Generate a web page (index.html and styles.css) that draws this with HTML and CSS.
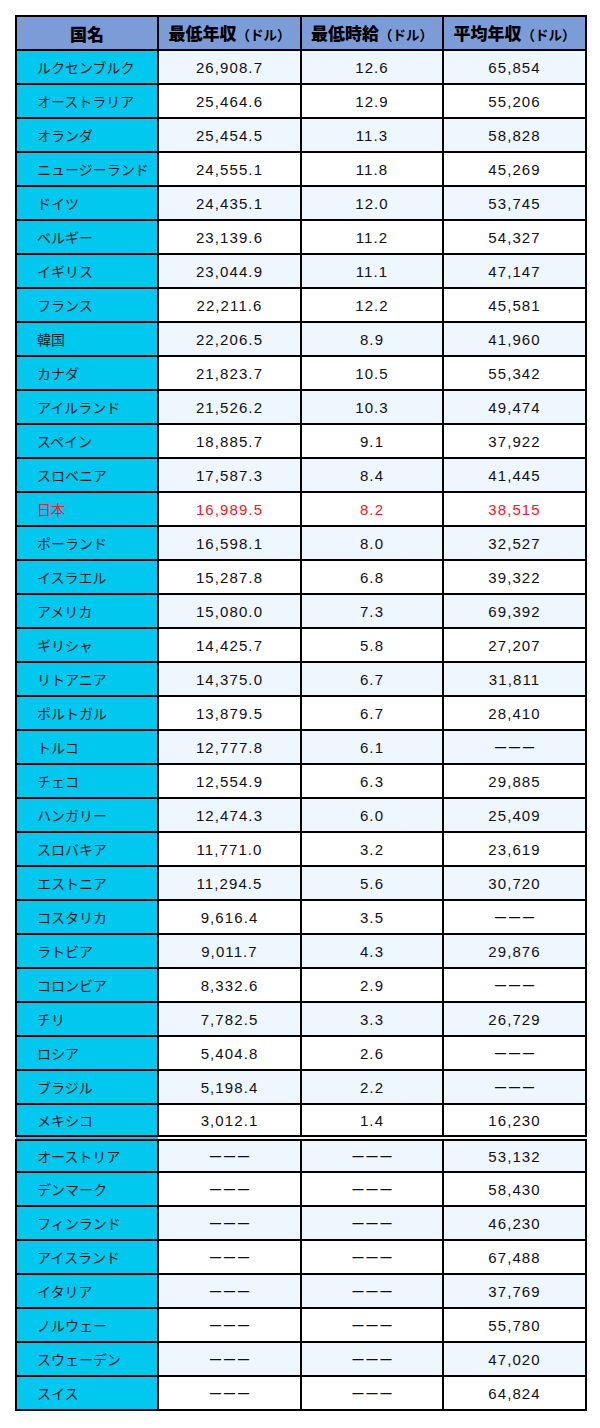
FILE: index.html
```html
<!DOCTYPE html>
<html lang="ja">
<head>
<meta charset="utf-8">
<title>最低賃金</title>
<link rel="stylesheet" href="styles.css">
</head>
<body>
<table class="wage">
<colgroup><col class="c1"><col class="c2"><col class="c3"><col class="c4"></colgroup>
<thead>
<tr><th>国名</th><th>最低年収<span class="unit">（ドル）</span></th><th>最低時給<span class="unit">（ドル）</span></th><th>平均年収<span class="unit">（ドル）</span></th></tr>
</thead>
<tbody>
<tr><td class="name">ルクセンブルク</td><td>26,908.7</td><td>12.6</td><td>65,854</td></tr>
<tr><td class="name">オーストラリア</td><td>25,464.6</td><td>12.9</td><td>55,206</td></tr>
<tr><td class="name">オランダ</td><td>25,454.5</td><td>11.3</td><td>58,828</td></tr>
<tr><td class="name">ニュージーランド</td><td>24,555.1</td><td>11.8</td><td>45,269</td></tr>
<tr><td class="name">ドイツ</td><td>24,435.1</td><td>12.0</td><td>53,745</td></tr>
<tr><td class="name">ベルギー</td><td>23,139.6</td><td>11.2</td><td>54,327</td></tr>
<tr><td class="name">イギリス</td><td>23,044.9</td><td>11.1</td><td>47,147</td></tr>
<tr><td class="name">フランス</td><td>22,211.6</td><td>12.2</td><td>45,581</td></tr>
<tr><td class="name">韓国</td><td>22,206.5</td><td>8.9</td><td>41,960</td></tr>
<tr><td class="name">カナダ</td><td>21,823.7</td><td>10.5</td><td>55,342</td></tr>
<tr><td class="name">アイルランド</td><td>21,526.2</td><td>10.3</td><td>49,474</td></tr>
<tr><td class="name">スペイン</td><td>18,885.7</td><td>9.1</td><td>37,922</td></tr>
<tr><td class="name">スロベニア</td><td>17,587.3</td><td>8.4</td><td>41,445</td></tr>
<tr class="jp"><td class="name">日本</td><td>16,989.5</td><td>8.2</td><td>38,515</td></tr>
<tr><td class="name">ポーランド</td><td>16,598.1</td><td>8.0</td><td>32,527</td></tr>
<tr><td class="name">イスラエル</td><td>15,287.8</td><td>6.8</td><td>39,322</td></tr>
<tr><td class="name">アメリカ</td><td>15,080.0</td><td>7.3</td><td>69,392</td></tr>
<tr><td class="name">ギリシャ</td><td>14,425.7</td><td>5.8</td><td>27,207</td></tr>
<tr><td class="name">リトアニア</td><td>14,375.0</td><td>6.7</td><td>31,811</td></tr>
<tr><td class="name">ポルトガル</td><td>13,879.5</td><td>6.7</td><td>28,410</td></tr>
<tr><td class="name">トルコ</td><td>12,777.8</td><td>6.1</td><td class="na">ーーー</td></tr>
<tr><td class="name">チェコ</td><td>12,554.9</td><td>6.3</td><td>29,885</td></tr>
<tr><td class="name">ハンガリー</td><td>12,474.3</td><td>6.0</td><td>25,409</td></tr>
<tr><td class="name">スロバキア</td><td>11,771.0</td><td>3.2</td><td>23,619</td></tr>
<tr><td class="name">エストニア</td><td>11,294.5</td><td>5.6</td><td>30,720</td></tr>
<tr><td class="name">コスタリカ</td><td>9,616.4</td><td>3.5</td><td class="na">ーーー</td></tr>
<tr><td class="name">ラトビア</td><td>9,011.7</td><td>4.3</td><td>29,876</td></tr>
<tr><td class="name">コロンビア</td><td>8,332.6</td><td>2.9</td><td class="na">ーーー</td></tr>
<tr><td class="name">チリ</td><td>7,782.5</td><td>3.3</td><td>26,729</td></tr>
<tr><td class="name">ロシア</td><td>5,404.8</td><td>2.6</td><td class="na">ーーー</td></tr>
<tr><td class="name">ブラジル</td><td>5,198.4</td><td>2.2</td><td class="na">ーーー</td></tr>
<tr class="sep"><td class="name">メキシコ</td><td>3,012.1</td><td>1.4</td><td>16,230</td></tr>
<tr><td class="name">オーストリア</td><td class="na">ーーー</td><td class="na">ーーー</td><td>53,132</td></tr>
<tr><td class="name">デンマーク</td><td class="na">ーーー</td><td class="na">ーーー</td><td>58,430</td></tr>
<tr><td class="name">フィンランド</td><td class="na">ーーー</td><td class="na">ーーー</td><td>46,230</td></tr>
<tr><td class="name">アイスランド</td><td class="na">ーーー</td><td class="na">ーーー</td><td>67,488</td></tr>
<tr><td class="name">イタリア</td><td class="na">ーーー</td><td class="na">ーーー</td><td>37,769</td></tr>
<tr><td class="name">ノルウェー</td><td class="na">ーーー</td><td class="na">ーーー</td><td>55,780</td></tr>
<tr><td class="name">スウェーデン</td><td class="na">ーーー</td><td class="na">ーーー</td><td>47,020</td></tr>
<tr><td class="name">スイス</td><td class="na">ーーー</td><td class="na">ーーー</td><td>64,824</td></tr>
</tbody>
</table>
</body>
</html>
```
FILE: styles.css
```css
html, body {
  margin: 0;
  padding: 0;
  background: #ffffff;
}
body {
  padding: 15px;
  font-family: "Liberation Sans", "Noto Sans CJK JP", sans-serif;
  color: #111111;
}
.wage {
  width: 570px;
  border-collapse: collapse;
  border: 2px solid #000000;
  table-layout: fixed;
}
.c1 { width: 142px; }
.c2 { width: 143px; }
.c3 { width: 142px; }
.c4 { width: 143px; }
.wage th,
.wage td {
  border: 2px solid #000000;
  padding: 0;
  height: 34px;
  text-align: center;
  vertical-align: middle;
  box-sizing: border-box;
}
.wage th {
  background: #7c9cd8;
  font-family: "Noto Sans CJK JP", sans-serif;
  font-weight: 900;
  font-size: 17px;
  color: #000000;
  line-height: 1;
  white-space: nowrap;
}
.unit {
  font-size: 13.5px;
  font-weight: 700;
}
.wage td {
  font-size: 15px;
  letter-spacing: 1.1px;
  line-height: 1;
}
.wage tbody tr:nth-child(odd) td {
  background: #eef6fe;
}
.wage tbody tr:nth-child(even) td {
  background: #ffffff;
}
.wage tbody tr td.name {
  background: #00c8ee;
  text-align: left;
  padding-left: 20px;
  font-family: "Noto Sans CJK JP", sans-serif;
  font-size: 14px;
  letter-spacing: 0;
  color: #1a1a1a;
}
.wage td.na {
  font-family: "Noto Sans CJK JP", sans-serif;
  font-size: 14px;
  letter-spacing: 0;
}
.wage tr.jp td,
.wage tbody tr.jp td.name {
  color: #e8202a;
}
.wage tr.sep td {
  border-bottom: 6px double #000000;
}
```
